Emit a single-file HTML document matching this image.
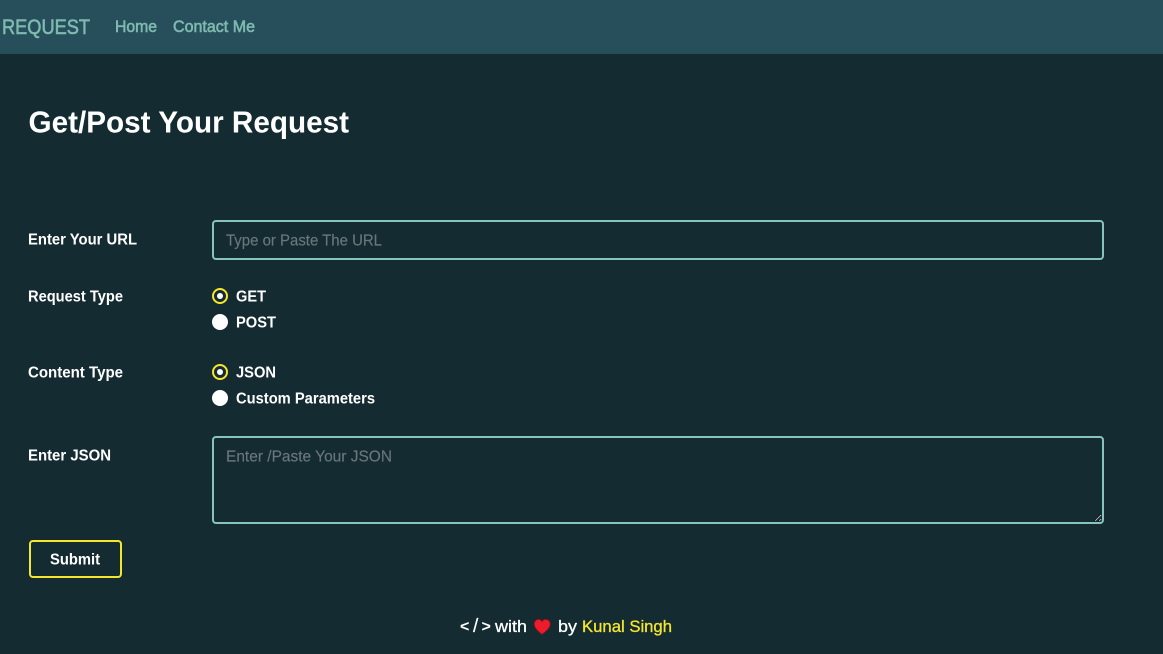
<!DOCTYPE html>
<html lang="en">
<head>
<meta charset="utf-8">
<title>Request</title>
<style>
html,body{margin:0;padding:0;width:1163px;height:654px;overflow:hidden;background:#142b32}
body{position:relative;font-family:"Liberation Sans",sans-serif}
nav{position:absolute;left:0;top:0;width:1163px;height:54px;background:#274f5b}
input,textarea,.btn,.radio{position:absolute;box-sizing:border-box;margin:0;padding:0;background:transparent}
input,textarea{left:212px;width:892px;border:2px solid #87c4bc;border-radius:4px;outline:none}
input{top:220px;height:40px}
textarea{top:436px;height:88px;resize:vertical}
.btn{left:29px;top:540px;width:93px;height:38px;border:2px solid #f5e62e;border-radius:4px}
.radio{left:212px;width:16px;height:16px;border-radius:50%;background:#fff}
.radio.on{background:#142b32;border:2px solid #f5e62e}
.radio.on::after{content:"";position:absolute;left:3px;top:3px;width:6px;height:6px;border-radius:50%;background:#fff}
svg{position:absolute;left:0;top:0;pointer-events:none}
text{font-family:"Liberation Sans",sans-serif;fill:#fff}
.b{font-weight:700;font-size:16px}
.n{fill:#7fb9b0;font-size:17px;stroke:#7fb9b0;stroke-width:.6px}
.p{fill:#69777b;font-size:16px;stroke:#69777b;stroke-width:.15px}
.f{font-size:17px;stroke:#fff;stroke-width:.3px}
</style>
</head>
<body>
<nav></nav>
<input type="text">
<div class="radio on" style="top:288px"></div>
<div class="radio" style="top:314px"></div>
<div class="radio on" style="top:364px"></div>
<div class="radio" style="top:390px"></div>
<textarea></textarea>
<div class="btn"></div>
<svg width="1163" height="654" viewBox="0 0 1163 654">
<text x="2" y="34" textLength="88" lengthAdjust="spacingAndGlyphs" style="fill:#7fb9b0;font-size:21px;stroke:#7fb9b0;stroke-width:.6px">REQUEST</text>
<text class="n" x="115" y="32" textLength="42" lengthAdjust="spacingAndGlyphs">Home</text>
<text class="n" x="173" y="32" textLength="82" lengthAdjust="spacingAndGlyphs">Contact Me</text>
<text x="28.5" y="132.5" textLength="320.5" lengthAdjust="spacingAndGlyphs" style="font-size:31px;font-weight:700">Get/Post Your Request</text>
<text class="b" x="28" y="244.5" textLength="109" lengthAdjust="spacingAndGlyphs">Enter Your URL</text>
<text class="p" x="226" y="245.5" textLength="156" lengthAdjust="spacingAndGlyphs">Type or Paste The URL</text>
<text class="b" x="28" y="301.5" textLength="95" lengthAdjust="spacingAndGlyphs">Request Type</text>
<text class="b" x="236" y="301.5" textLength="30" lengthAdjust="spacingAndGlyphs">GET</text>
<text class="b" x="236" y="327.5" textLength="40" lengthAdjust="spacingAndGlyphs">POST</text>
<text class="b" x="28" y="377.5" textLength="95" lengthAdjust="spacingAndGlyphs">Content Type</text>
<text class="b" x="236" y="377.5" textLength="40" lengthAdjust="spacingAndGlyphs">JSON</text>
<text class="b" x="236" y="403.5" textLength="139" lengthAdjust="spacingAndGlyphs">Custom Parameters</text>
<text class="b" x="28" y="460.5" textLength="83" lengthAdjust="spacingAndGlyphs">Enter JSON</text>
<text class="p" x="226" y="461.5" textLength="166" lengthAdjust="spacingAndGlyphs">Enter /Paste Your JSON</text>
<text class="b" x="50" y="564.5" textLength="50" lengthAdjust="spacingAndGlyphs">Submit</text>
<text x="460" y="631.5" style="font-size:16px;font-weight:700">&lt;</text>
<text x="473" y="632" style="font-size:19px;stroke:#fff;stroke-width:.2px">/</text>
<text x="481.500" y="631.5" style="font-size:16px;font-weight:700">&gt;</text>
<text class="f" x="495" y="632" textLength="32" lengthAdjust="spacingAndGlyphs">with</text>
<path d="M542 634.5C539 632 534.2 628.5 534.2 624C534.2 621.2 536.2 619.3 538.5 619.3C540 619.3 541.3 620 542 621.5C542.8 620 544 619.3 545.6 619.3C548 619.3 550.3 621.2 550.3 624C550.3 628.5 545 632 542 634.5Z" fill="#ed1c2b" stroke="#7a1420" stroke-width=".8"/>
<text class="f" x="558" y="632" textLength="19" lengthAdjust="spacingAndGlyphs">by</text>
<text class="f" x="582" y="632" textLength="90" lengthAdjust="spacingAndGlyphs" style="fill:#f5e62e;stroke:#f5e62e">Kunal Singh</text>
</svg>
</body>
</html>
